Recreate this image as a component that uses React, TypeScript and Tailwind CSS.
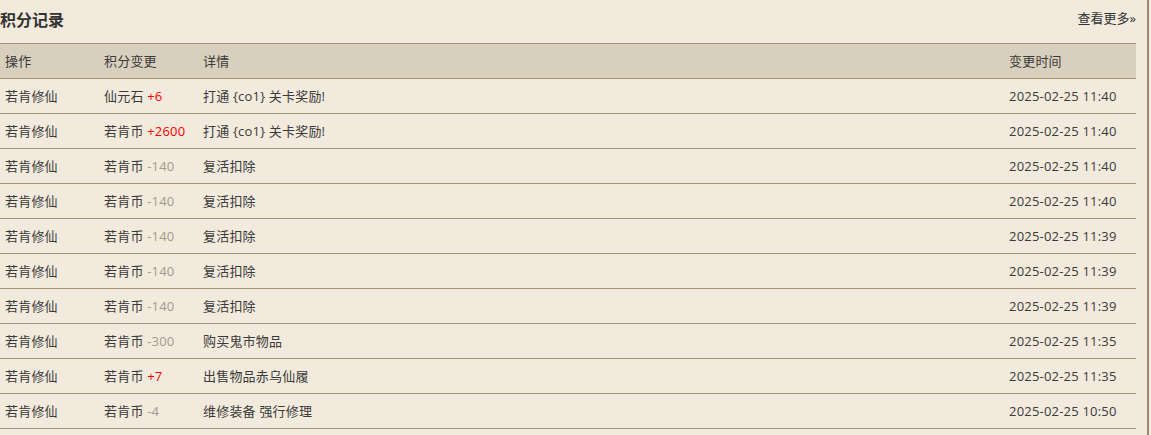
import React from "react";

type Row = { item: string; delta: string; pos: boolean; detail: string; time: string };

const rows: Row[] = [
  { item: "仙元石", delta: "+6", pos: true, detail: "打通 {co1} 关卡奖励!", time: "2025-02-25 11:40" },
  { item: "若肯币", delta: "+2600", pos: true, detail: "打通 {co1} 关卡奖励!", time: "2025-02-25 11:40" },
  { item: "若肯币", delta: "-140", pos: false, detail: "复活扣除", time: "2025-02-25 11:40" },
  { item: "若肯币", delta: "-140", pos: false, detail: "复活扣除", time: "2025-02-25 11:40" },
  { item: "若肯币", delta: "-140", pos: false, detail: "复活扣除", time: "2025-02-25 11:39" },
  { item: "若肯币", delta: "-140", pos: false, detail: "复活扣除", time: "2025-02-25 11:39" },
  { item: "若肯币", delta: "-140", pos: false, detail: "复活扣除", time: "2025-02-25 11:39" },
  { item: "若肯币", delta: "-300", pos: false, detail: "购买鬼市物品", time: "2025-02-25 11:35" },
  { item: "若肯币", delta: "+7", pos: true, detail: "出售物品赤乌仙履", time: "2025-02-25 11:35" },
  { item: "若肯币", delta: "-4", pos: false, detail: "维修装备 强行修理", time: "2025-02-25 10:50" },
];

export default function App() {
  return (
    <div
      className="w-[1151px] h-[435px] bg-[#f2eadc] text-[#3a3a3a] text-[13px] tracking-[0.2px] flex overflow-hidden"
      style={{ fontFamily: '"Open Sans", "Noto Sans CJK SC", sans-serif' }}
    >
      <div className="w-[1136px] shrink-0 flex flex-col">
        <div className="h-[43px] flex items-center justify-between">
          <h2 className="text-[16px] font-bold text-[#333] leading-none tracking-normal -mt-[3px]">积分记录</h2>
          <a className="text-[13px] text-[#333] leading-none tracking-normal -mt-[6px]">查看更多»</a>
        </div>
        <table className="w-full border-collapse table-fixed">
          <colgroup>
            <col className="w-[99px]" />
            <col className="w-[99px]" />
            <col />
            <col className="w-[132px]" />
          </colgroup>
          <thead>
            <tr className="bg-[#d8d0bd] h-[35px] border-y border-[#a59576]">
              <th className="text-left font-normal p-0 pl-[5px] pt-[2px]">操作</th>
              <th className="text-left font-normal p-0 pl-[5px] pt-[2px]">积分变更</th>
              <th className="text-left font-normal p-0 pl-[5px] pt-[2px]">详情</th>
              <th className="text-left font-normal p-0 pl-[5px] pt-[2px]">变更时间</th>
            </tr>
          </thead>
          <tbody>
            {rows.map((r, i) => (
              <tr key={i} className="h-[35px] border-b border-[#a59576]">
                <td className="p-0 pl-[5px] pt-[2px]">若肯修仙</td>
                <td className="p-0 pl-[5px] pt-[2px]">
                  {r.item}{" "}
                  <span className={r.pos ? "text-[#ff0000]" : "text-[#a39a8c]"}>{r.delta}</span>
                </td>
                <td className="p-0 pl-[5px] pt-[2px]">{r.detail}</td>
                <td className="p-0 pl-[5px] pt-[2px]">{r.time}</td>
              </tr>
            ))}
          </tbody>
        </table>
      </div>
      <div className="w-[15px] shrink-0 flex justify-end pr-[2px]">
        <div className="w-[2px] h-full bg-[#9c8a6c]" />
      </div>
    </div>
  );
}
